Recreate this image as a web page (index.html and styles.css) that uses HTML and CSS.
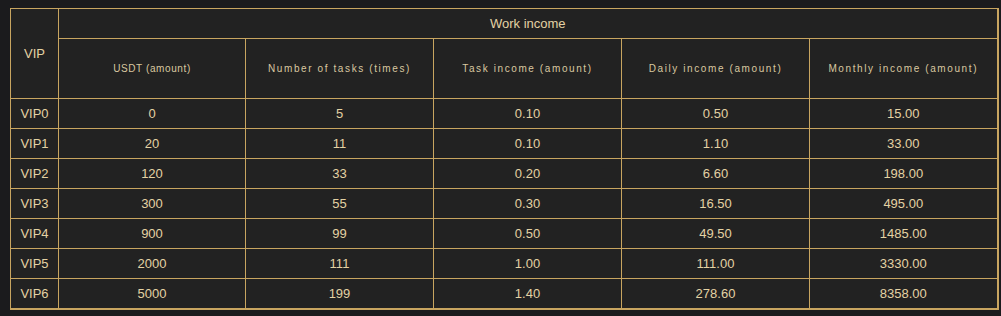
FILE: index.html
```html
<!DOCTYPE html>
<html lang="en">
<head>
<meta charset="utf-8">
<title>VIP Work income</title>
<link rel="stylesheet" href="styles.css">
</head>
<body>
<table class="vip-table">
  <colgroup>
    <col class="c-vip">
    <col class="c-a">
    <col class="c-b">
    <col class="c-b">
    <col class="c-b">
    <col class="c-b">
  </colgroup>
  <thead>
    <tr class="row-top">
      <th rowspan="2" class="th-vip">VIP</th>
      <th colspan="5" class="th-group">Work income</th>
    </tr>
    <tr class="row-sub">
      <th class="th-sub th-tight">USDT (amount)</th>
      <th class="th-sub">Number of tasks (times)</th>
      <th class="th-sub">Task income (amount)</th>
      <th class="th-sub">Daily income (amount)</th>
      <th class="th-sub">Monthly income (amount)</th>
    </tr>
  </thead>
  <tbody>
    <tr><td>VIP0</td><td>0</td><td>5</td><td>0.10</td><td>0.50</td><td>15.00</td></tr>
    <tr><td>VIP1</td><td>20</td><td>11</td><td>0.10</td><td>1.10</td><td>33.00</td></tr>
    <tr><td>VIP2</td><td>120</td><td>33</td><td>0.20</td><td>6.60</td><td>198.00</td></tr>
    <tr><td>VIP3</td><td>300</td><td>55</td><td>0.30</td><td>16.50</td><td>495.00</td></tr>
    <tr><td>VIP4</td><td>900</td><td>99</td><td>0.50</td><td>49.50</td><td>1485.00</td></tr>
    <tr><td>VIP5</td><td>2000</td><td>111</td><td>1.00</td><td>111.00</td><td>3330.00</td></tr>
    <tr><td>VIP6</td><td>5000</td><td>199</td><td>1.40</td><td>278.60</td><td>8358.00</td></tr>
  </tbody>
</table>
</body>
</html>
```

FILE: styles.css
```css
html, body {
  margin: 0;
  padding: 0;
  background: #1b1b1d;
}

body {
  padding: 8px 10px;
  font-family: "Liberation Sans", Arial, sans-serif;
  color: #e4d2a4;
}

.vip-table {
  border-collapse: collapse;
  table-layout: fixed;
  width: 987px;
  background: #222222;
  border-top: 1px solid #c8a560;
  border-left: 1px solid #c8a560;
  border-right: 2px solid #c8a560;
  border-bottom: 2px solid #c8a560;
}

.c-vip { width: 48px; }
.c-a { width: 187px; }
.c-b { width: 188px; }

.vip-table th,
.vip-table td {
  border: 1px solid #c8a560;
  padding: 0;
  text-align: center;
  vertical-align: middle;
  font-weight: normal;
  font-size: 13px;
  line-height: 15px;
}

.row-top { height: 30px; }
.row-sub { height: 60px; }
.vip-table tbody tr { height: 30px; }

.vip-table .th-sub {
  font-size: 10px;
  letter-spacing: 1.6px;
  color: #d9c8a0;
}

.vip-table .th-tight {
  letter-spacing: 0.6px;
}
```
